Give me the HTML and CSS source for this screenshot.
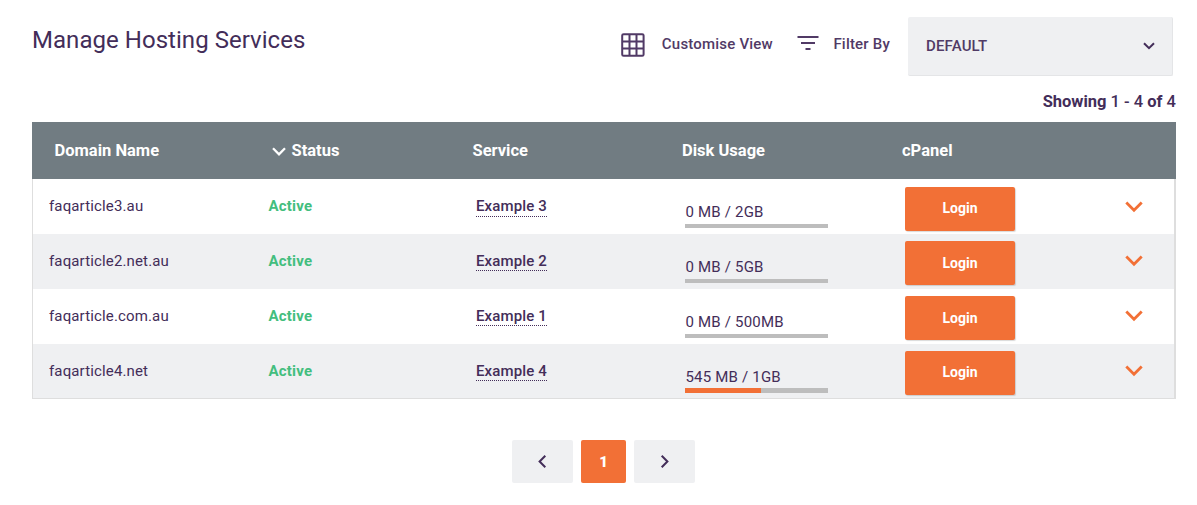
FILE: index.html
```html
<!DOCTYPE html>
<html lang="en">
<head>
    <meta charset="UTF-8">
    <meta name="viewport" content="width=device-width, initial-scale=1.0">
    <title>Manage Hosting Services</title>
    <link rel="stylesheet" href="styles.css">
</head>
<body>
<div class="container">
    <header class="toolbar">
        <h1>Manage Hosting Services</h1>
        <a class="tool customise">
            <svg width="24" height="24" viewBox="0 0 24 24"><rect x="1.2" y="1.2" width="21.4" height="21.6" rx="1.4"/><path d="M8.5 1v22M15.5 1v22M1 8.5h22M1 15.5h22"/></svg>
            <span>Customise View</span>
        </a>
        <a class="tool filter">
            <svg width="22" height="14" viewBox="0 0 22 14"><path d="M.5 1h21M4 7h14M8.5 13h5"/></svg>
            <span>Filter By</span>
        </a>
        <div class="select">
            <span>DEFAULT</span>
            <svg width="12" height="8" viewBox="0 0 12 8"><path d="M1 1.2l5 5 5-5"/></svg>
        </div>
    </header>

    <p class="showing"><b>Showing</b> 1 - 4 <b>of</b> 4</p>

    <div class="table">
        <div class="table-head">
            <span>Domain Name</span>
            <span><svg width="14" height="9" viewBox="0 0 14 9"><path d="M1 1.3l6 6 6-6"/></svg>Status</span>
            <span>Service</span>
            <span>Disk Usage</span>
            <span>cPanel</span>
        </div>
        <div class="table-row">
            <span class="domain">faqarticle3.au</span>
            <span class="status">Active</span>
            <span class="service"><a>Example 3</a></span>
            <div class="disk"><span>0 MB / 2GB</span><div class="bar"></div></div>
            <div class="panel"><button>Login</button></div>
            <svg class="expand" width="18" height="12" viewBox="0 0 18 12"><path d="M1.3 1.5L9 9.2l7.7-7.7"/></svg>
        </div>
        <div class="table-row">
            <span class="domain">faqarticle2.net.au</span>
            <span class="status">Active</span>
            <span class="service"><a>Example 2</a></span>
            <div class="disk"><span>0 MB / 5GB</span><div class="bar"></div></div>
            <div class="panel"><button>Login</button></div>
            <svg class="expand" width="18" height="12" viewBox="0 0 18 12"><path d="M1.3 1.5L9 9.2l7.7-7.7"/></svg>
        </div>
        <div class="table-row">
            <span class="domain">faqarticle.com.au</span>
            <span class="status">Active</span>
            <span class="service"><a>Example 1</a></span>
            <div class="disk"><span>0 MB / 500MB</span><div class="bar"></div></div>
            <div class="panel"><button>Login</button></div>
            <svg class="expand" width="18" height="12" viewBox="0 0 18 12"><path d="M1.3 1.5L9 9.2l7.7-7.7"/></svg>
        </div>
        <div class="table-row">
            <span class="domain">faqarticle4.net</span>
            <span class="status">Active</span>
            <span class="service"><a>Example 4</a></span>
            <div class="disk"><span>545 MB / 1GB</span><div class="bar"><div class="used" style="width: 53.2%"></div></div></div>
            <div class="panel"><button>Login</button></div>
            <svg class="expand" width="18" height="12" viewBox="0 0 18 12"><path d="M1.3 1.5L9 9.2l7.7-7.7"/></svg>
        </div>
    </div>

    <nav class="pagination">
        <a><svg width="9" height="13" viewBox="0 0 9 13"><path d="M7.3 .8L1.6 6.5l5.7 5.7"/></svg></a>
        <a class="current">1</a>
        <a><svg width="9" height="13" viewBox="0 0 9 13"><path d="M1.7 .8l5.7 5.7-5.7 5.7"/></svg></a>
    </nav>
</div>
</body>
</html>
```
FILE: styles.css
```css
* { box-sizing: border-box; }
body { margin: 0; background: #fff; color: #432d59; font-family: Roboto, Arial, sans-serif; font-size: 15px; }
svg { display: block; flex: none; fill: none; stroke: #432d59; stroke-width: 2; }
.container { width: 1144px; margin-left: 32px; padding-top: 17px; }

.toolbar { display: flex; height: 59px; padding-right: 3px; }
h1 { margin: 8px auto 0 0; font-size: 24px; line-height: 30px; font-weight: 400; letter-spacing: 0.04px; }
.tool { display: flex; height: 54px; align-items: center; color: #513a66; font-weight: 500; letter-spacing: 0.2px; }
.tool svg { stroke: #513a66; }
.customise { gap: 17px; margin-right: 24.5px; }
.customise svg { margin-top: 2px; }
.filter { gap: 14px; margin-right: 18px; }
.filter svg { margin-top: -2px; }
.select { display: flex; width: 265px; padding: 0 17px 0 18px; align-items: center; justify-content: space-between; background: #eff0f2; border-radius: 2px; border-right: 1px solid #e4e5e7; border-bottom: 1px solid #e4e5e7; color: #513a66; font-weight: 500; letter-spacing: 0.15px; }

.showing { margin: 16px 0 10px; text-align: right; font-size: 16.5px; line-height: 20px; font-weight: 500; }
.showing b { font-weight: 700; }

.table-head { display: grid; grid-template-columns: 217px 201px 209.5px 220px 1fr; height: 57.2px; padding-left: 22.5px; align-items: center; background: #717c82; color: #fff; font-size: 16.5px; font-weight: 700; }
.table-head span { display: flex; align-items: center; }
.table-head svg { margin-top: 2px; margin-right: 6px; stroke: #fff; stroke-width: 2.3; }

.table-row { display: grid; grid-template-columns: 219px 208px 209px 220px 221px 1fr; height: 54.8px; padding-left: 16px; align-items: start; border-left: 1px solid #dedede; border-right: 2px solid #dedede; line-height: 20px; letter-spacing: 0.2px; }
.table-row:nth-child(odd) { background: #eff0f2; }
.table-row:last-child { height: 55.8px; border-bottom: 1px solid #dedede; }
.domain, .status, .service { padding-top: 17px; }
.domain { letter-spacing: 0.14px; }
.status { padding-left: 0.4px; color: #43be7e; font-weight: 700; letter-spacing: 0.25px; }
.service { font-weight: 500; letter-spacing: 0.12px; }
.service a { display: inline-block; height: 20.5px; border-bottom: 1px dotted #432d59; }
.disk { padding-top: 23px; }
.disk span { display: block; padding-left: 0.4px; }
.bar { width: 143px; height: 4.5px; margin-top: 1.8px; background: #bdbdbd; }
.used { height: 100%; background: #f27036; }
.panel { padding-top: 7.4px; }
button { display: block; width: 110px; height: 44px; padding-bottom: 2px; border: 0; border-radius: 2px; background: #f27036; box-shadow: 1px 1px 1px rgba(0, 0, 0, 0.15); color: #fff; font: 700 14px Roboto, Arial, sans-serif; }
.expand { margin-top: 21.5px; margin-left: -1px; stroke: #f27036; stroke-width: 2.8; }

.pagination { display: flex; margin-top: 41px; margin-left: 480px; gap: 8px; }
.pagination a { display: flex; width: 61px; height: 43px; align-items: center; justify-content: center; background: #eff0f2; border-radius: 2px; }
.pagination .current { width: 45px; background: #f27036; color: #fff; font-weight: 900; }
```
